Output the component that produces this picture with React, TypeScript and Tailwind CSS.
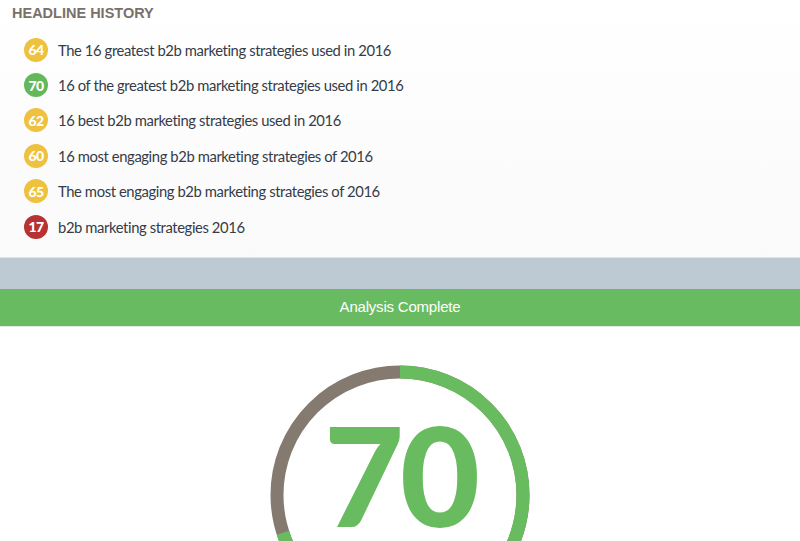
import React from "react";

type HeadlineRow = {
  score: number;
  text: string;
  color: string;
};

const history: HeadlineRow[] = [
  { score: 64, text: "The 16 greatest b2b marketing strategies used in 2016", color: "bg-[#eec13f]" },
  { score: 70, text: "16 of the greatest b2b marketing strategies used in 2016", color: "bg-[#63b85b]" },
  { score: 62, text: "16 best b2b marketing strategies used in 2016", color: "bg-[#eec13f]" },
  { score: 60, text: "16 most engaging b2b marketing strategies of 2016", color: "bg-[#eec13f]" },
  { score: 65, text: "The most engaging b2b marketing strategies of 2016", color: "bg-[#eec13f]" },
  { score: 17, text: "b2b marketing strategies 2016", color: "bg-[#b73233]" },
];

function ScoreRing({ score }: { score: number }) {
  const r = 123;
  const c = 2 * Math.PI * r;
  const filled = (c * score) / 100;

  return (
    <div className="relative w-[272px] h-[272px]">
      <svg width="272" height="272" viewBox="0 0 272 272" className="-rotate-90">
        <circle cx="136" cy="136" r={r} fill="none" stroke="#857a70" strokeWidth="13" />
        <circle
          cx="136"
          cy="136"
          r={r}
          fill="none"
          stroke="#68bb5f"
          strokeWidth="13"
          strokeDasharray={`${filled} ${c}`}
        />
      </svg>
      <div className="absolute left-0 right-0 top-[46px] text-center font-['Lato',sans-serif] font-black text-[138px] leading-none text-[#68bb5f] tracking-[-4px]">
        {score}
      </div>
    </div>
  );
}

export default function App() {
  return (
    <div className="w-[800px] h-[541px] overflow-hidden bg-white">
      {/* history */}
      <div className="h-[257px] bg-gradient-to-b from-white to-[#fafafa] pt-[5px]">
        <h2 className="pl-[12px] font-['Liberation_Sans',sans-serif] font-bold text-[14.5px] leading-[17px] text-[#7a706a]">
          HEADLINE HISTORY
        </h2>
        <ul className="pl-[24px] pt-[10px]">
          {history.map((row) => (
            <li key={row.text} className="flex items-center h-[35.4px]">
              <span
                className={`${row.color} w-[24px] h-[24px] rounded-full flex items-center justify-center text-white font-['Lato',sans-serif] font-black text-[14px] tracking-[-0.5px]`}
              >
                {row.score}
              </span>
              <span className="ml-[10px] font-['Lato',sans-serif] text-[14.8px] tracking-[-0.4px] text-[#353b48]">
                {row.text}
              </span>
            </li>
          ))}
        </ul>
      </div>

      {/* status bar */}
      <div className="h-[32px] bg-[#bdcad3] border-t border-[#dde3e7]" />
      <div className="h-[38px] bg-[#69bb61] flex items-center justify-center font-['Liberation_Sans',sans-serif] text-[15px] tracking-[-0.2px] text-white border-b border-[#e3e8e3]">
        Analysis Complete
      </div>

      {/* score */}
      <div className="flex justify-center pt-[32px]">
        <ScoreRing score={70} />
      </div>
    </div>
  );
}
